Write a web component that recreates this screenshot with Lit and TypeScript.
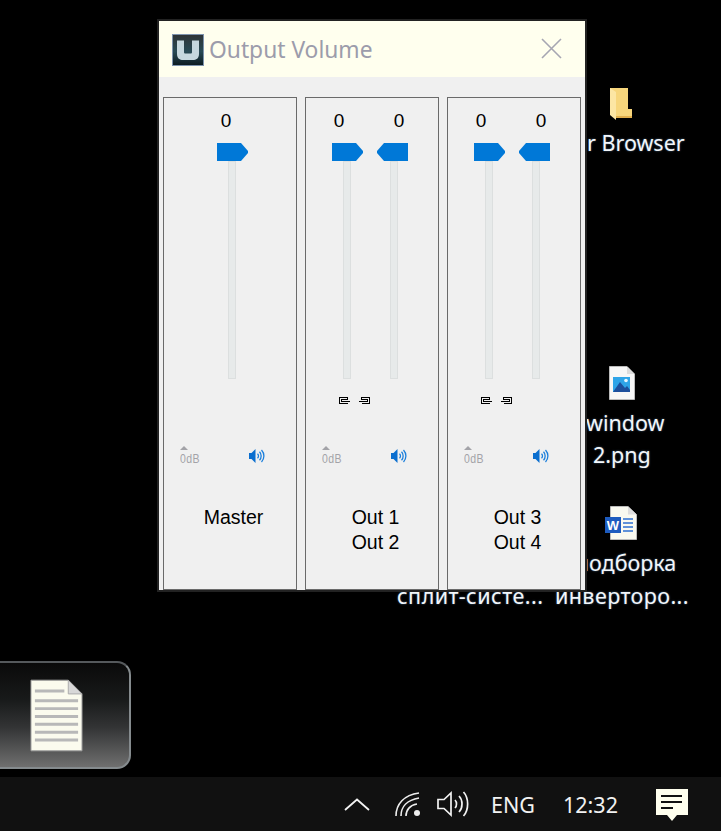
import { LitElement, html, css, svg } from "lit";
import { customElement } from "lit/decorators.js";

const speaker = html`<svg class="spk" width="16" height="16" viewBox="0 0 16 16" fill="none">
  <path d="M0 5H2.500L6.500 1V15L2.500 11H0Z" fill="#0a6ecf"/>
  <path d="M8.500 5.800C9.800 7 9.800 9 8.500 10.300" stroke="#1b7fdc" stroke-width="1.300"/>
  <path d="M10.500 3.800C12.700 6 12.700 10 10.500 12.300" stroke="#1b7fdc" stroke-width="1.300"/>
  <path d="M12.500 2C15.700 5.500 15.700 10.500 12.500 14" stroke="#1b7fdc" stroke-width="1.300"/>
</svg>`;

const thumbR = html`<svg class="thumb" width="31" height="18" viewBox="0 0 31 18"><path d="M0 0H24L31 8V10L24 18H0Z" fill="#0078d7"/></svg>`;
const thumbL = html`<svg class="thumb" width="31" height="18" viewBox="0 0 31 18"><path d="M31 0H7L0 8V10L7 18H31Z" fill="#0078d7"/></svg>`;

const linkL = svg`<path d="M8.500 2.500V.5H.5V6.500H8.500M8.500 2.500H2.500V4.500H11" fill="none" stroke="#000" stroke-width="1"/>`;
const linkR = svg`<path d="M2.500 2.500V.5H10.500V6.500H2.500M2.500 2.500H8.500V4.500H0" fill="none" stroke="#000" stroke-width="1"/>`;

@customElement("app-root")
export class AppRoot extends LitElement {
  static styles = css`
    :host { display: block; width: 721px; height: 831px; overflow: hidden; }
    .screen { position: relative; width: 721px; height: 831px; background: #000; display: flex; flex-direction: column; overflow: hidden; font-family: "Noto Sans", "Open Sans", sans-serif; }
    .desktop { flex: 1; position: relative; }
    .dtext { position: absolute; color: #f2f6fa; font-size: 21.5px; line-height: 32px; white-space: nowrap; text-shadow: 0 0 2px rgba(120,170,220,.6); }
    .t-browser { left: 587px; top: 127px; }
    .t-window { left: 586px; top: 407px; }
    .t-png { left: 593px; top: 439px; }
    .t-podb { left: 576px; top: 547px; }
    .t-split { left: 397px; top: 580px; letter-spacing: .5px; }
    .t-inv { left: 555px; top: 580px; letter-spacing: .4px; }
    .dicon { position: absolute; display: block; }
    .i-folder { left: 608px; top: 87px; }
    .i-image { left: 609px; top: 366px; }
    .i-word { left: 605px; top: 505px; }
    .window { position: absolute; left: 157px; top: 19px; width: 426px; height: 569px; border: 2px solid #222; background: #f0f0f0; display: flex; flex-direction: column; box-sizing: content-box; }
    .title { height: 56px; flex: none; background: #ffffee; display: flex; align-items: center; padding: 1px 0 0 13px; box-sizing: border-box; }
    .title-text { margin-left: 5px; font-size: 22.8px; color: #9c9cab; font-family: "Noto Sans", sans-serif; white-space: nowrap; }
    .close { margin-left: auto; margin-right: 23px; margin-top: -3px; }
    .panels { display: flex; gap: 8px; padding: 20px 0 0 4px; flex: 1; min-height: 0; }
    .panel { width: 134px; box-sizing: border-box; border: 1px solid #6a6a6a; display: flex; flex-direction: column; font-family: "Liberation Sans", Arial, sans-serif; color: #000; height: 493px; }
    .values { display: flex; height: 22px; margin-top: 12px; font-size: 19px; line-height: 22px; gap: 40px; padding-left: 23px; }
    .values.single { padding-left: 52px; }
    .values span { width: 20px; text-align: center; }
    .sliders { display: flex; gap: 14px; padding-left: 26px; margin-top: 11px; height: 236px; }
    .sliders.single { padding-left: 53px; }
    .slider { width: 31px; display: flex; flex-direction: column; }
    .thumb { display: block; flex: none; }
    .track { width: 8px; height: 218px; box-sizing: border-box; background: #e7eaea; border: 1px solid #dcdfdf; margin-left: 11px; }
    .slider.r .track { margin-left: 13px; }
    .links { display: flex; height: 8px; gap: 9px; padding-left: 33px; margin-top: 18px; }
    .links svg { display: block; }
    .links.empty svg { visibility: hidden; }
    .meters { display: flex; align-items: flex-start; justify-content: space-between; margin-top: 41px; height: 24px; padding: 0 31px 0 16px; }
    .db { display: flex; flex-direction: column; color: #a3a3a8; width: 24px; }
    .db i { display: block; width: 0; height: 0; border-left: 4px solid transparent; border-right: 4px solid transparent; border-bottom: 4px solid #a3a3a8; margin-bottom: 1px; }
    .db span { display: block; font-size: 10.500px; letter-spacing: .4px; line-height: 11px; transform: scale(1, 1.3); transform-origin: top left; }
    .spk { display: block; margin-top: 2px; }
    .label { margin-top: 35px; font-size: 19.500px; line-height: 25px; text-align: center; padding-left: 7px; white-space: nowrap; }
    .dock { position: absolute; left: -24px; top: 661px; width: 155px; height: 108px; box-sizing: border-box; border: 2px solid #858b8e; border-top-color: #55595c; border-left: none; border-radius: 14px; background: linear-gradient(#0a0a0a 0%, #181a1a 35%, #333435 62%, #6f6f6f 100%); display: flex; align-items: center; justify-content: center; padding-left: 8px; }
    .dock svg { margin-top: 1px; }
    .taskbar { height: 54px; flex: none; background: #111; color: #f2f2f2; display: flex; align-items: center; padding-left: 344px; box-sizing: border-box; position: relative; }
    .tray { display: block; flex: none; }
    .wifi { margin-left: 25px; }
    .vol { margin-left: 16px; }
    .note { margin-top: 3px; }
    .eng { font-size: 21.500px; margin-left: 21px; width: 72px; font-family: "Noto Sans", sans-serif; }
    .clock { font-size: 21.500px; width: 93px; font-family: "Noto Sans", sans-serif; }
  `;

  private panel(single: boolean, labels: string[]) {
    return html`<div class="panel">
      <div class="values ${single ? "single" : ""}">
        ${single ? html`<span>0</span>` : html`<span>0</span><span>0</span>`}
      </div>
      <div class="sliders ${single ? "single" : ""}">
        <div class="slider">${thumbR}<div class="track"></div></div>
        ${single ? "" : html`<div class="slider r">${thumbL}<div class="track"></div></div>`}
      </div>
      <div class="links ${single ? "empty" : ""}">
        <svg width="11" height="8" viewBox="0 0 11 8" shape-rendering="crispEdges">${linkL}</svg>
        <svg width="11" height="8" viewBox="0 0 11 8" shape-rendering="crispEdges">${linkR}</svg>
      </div>
      <div class="meters">
        <div class="db"><i></i><span>0dB</span></div>
        ${speaker}
      </div>
      <div class="label">${labels.map((l) => html`<div>${l}</div>`)}</div>
    </div>`;
  }

  render() {
    return html`<div class="screen">
      <div class="desktop">
        <svg class="dicon i-folder" width="24" height="34" viewBox="0 0 24 34">
          <path d="M2 1H20V22H24V30H7L2 27Z" fill="#f7d67c"/>
          <path d="M2 1L8 5V33L2 28Z" fill="#fce6a4"/>
          <path d="M8 29H24V31H8Z" fill="#e0ae4c"/>
        </svg>
        <div class="dtext t-browser">r Browser</div>
        <svg class="dicon i-image" width="26" height="34" viewBox="0 0 26 34">
          <path d="M.5.5H18L25.500 8V33.500H.5Z" fill="#f7f7f7" stroke="#bbb"/>
          <path d="M18 .5V8H25.500Z" fill="#dcdcdc"/>
          <path d="M4 11H21V26H4Z" fill="#2ea4e8"/>
          <circle cx="17" cy="14.500" r="1.800" fill="#e8f6ff"/>
          <path d="M4 26L11 16L16 22L18 20L21 24V26Z" fill="#1d4f9c"/>
        </svg>
        <div class="dtext t-window">window</div>
        <div class="dtext t-png">2.png</div>
        <svg class="dicon i-word" width="32" height="36" viewBox="0 0 32 36">
          <path d="M5.500 1.500H23L31.500 9.500V34.500H5.500Z" fill="#f9f9f0" stroke="#bbb"/>
          <path d="M23 1.500V9.500H31.500Z" fill="#dedede"/>
          <path d="M18 14H28M18 18H28M18 22H28M18 26H28" stroke="#2c6fd1" stroke-width="1.500"/>
          <rect x="0" y="12" width="16" height="16" fill="#1d5bbf"/>
          <text x="8" y="24.500" font-family="Liberation Sans" font-size="13" font-weight="700" fill="#fff" text-anchor="middle">W</text>
        </svg>
        <div class="dtext t-podb">подборка</div>
        <div class="dtext t-split">сплит-систе...</div>
        <div class="dtext t-inv">инверторо...</div>

        <div class="window">
          <div class="title">
            <svg width="32" height="32" viewBox="0 0 32 32">
              <defs>
                <linearGradient id="ug" x1="0" y1="0" x2="0" y2="1">
                  <stop offset="0" stop-color="#2f3436"/><stop offset=".55" stop-color="#274a55"/><stop offset="1" stop-color="#0c1a20"/>
                </linearGradient>
              </defs>
              <rect x=".5" y=".5" width="31" height="31" fill="url(#ug)" stroke="#7d93ad"/>
              <path d="M5 6.500V20C5 24.500 8 26 11 26H21C24 26 27 24.500 27 20V6.500H20V18C20 19 19.500 19.500 18.500 19.500H13.500C12.500 19.500 12 19 12 18V6.500Z" fill="#c5d7de"/>
            </svg>
            <span class="title-text">Output Volume</span>
            <svg class="close" width="21" height="21" viewBox="0 0 21 21"><path d="M1 1L20 20M20 1L1 20" stroke="#a6a6b2" stroke-width="1.600"/></svg>
          </div>
          <div class="panels">
            ${this.panel(true, ["Master"])}
            ${this.panel(false, ["Out 1", "Out 2"])}
            ${this.panel(false, ["Out 3", "Out 4"])}
          </div>
        </div>

        <div class="dock">
          <svg width="53" height="73" viewBox="0 0 54 74">
            <path d="M1 1H39L53 15V73H1Z" fill="#fbfbee" stroke="#9a9a9a"/>
            <path d="M39 1V15H53Z" fill="#d8d8d8" stroke="#aaa"/>
            <path d="M5 12H35M5 22H49M5 30H49M5 38H49M5 46H49M5 54H49M5 62H49" stroke="#b8b8b8" stroke-width="3"/>
          </svg>
        </div>
      </div>
      <div class="taskbar">
        <svg class="tray" width="26" height="13" viewBox="0 0 26 13"><path d="M1 12L13 1.500L25 12" fill="none" stroke="#f2f2f2" stroke-width="1.800"/></svg>
        <svg class="tray wifi" width="26" height="26" viewBox="0 0 26 26" fill="none" stroke="#eee" stroke-width="1.600">
          <path d="M1 25C1 13 9 4 24 2"/><path d="M6 25C6 16 12 9 24 7"/><path d="M11 25C11 19 15 14 22 13"/>
          <circle cx="22" cy="22" r="3" fill="#eee" stroke="none"/>
        </svg>
        <svg class="tray vol" width="33" height="28" viewBox="0 0 33 28" fill="none" stroke="#f2f2f2" stroke-width="1.700">
          <path d="M1 9.500H7L14 3V25L7 18.500H1Z"/>
          <path d="M18 10C20 12 20 16 18 18"/><path d="M22 6C26 10 26 18 22 22"/><path d="M26.500 2C32 8 32 20 26.500 26"/>
        </svg>
        <span class="eng">ENG</span>
        <span class="clock">12:32</span>
        <svg class="tray note" width="32" height="33" viewBox="0 0 32 33">
          <path d="M0 0H32V26H21L16 32L11 26H0Z" fill="#ffffee"/>
          <path d="M5 7H26M5 13H26M5 19H17" stroke="#111" stroke-width="2.200"/>
        </svg>
      </div>
    </div>`;
  }
}
